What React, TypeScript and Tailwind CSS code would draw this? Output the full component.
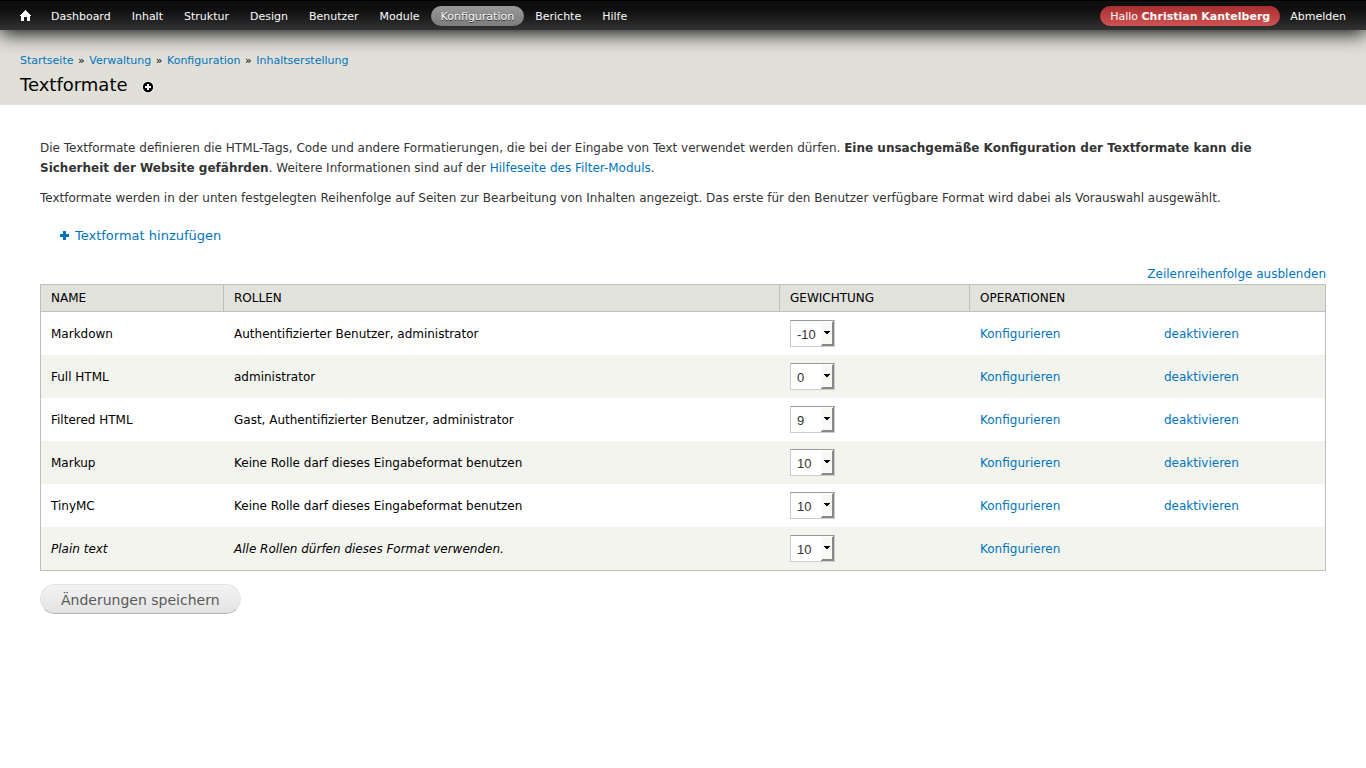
const menu = ["Dashboard", "Inhalt", "Struktur", "Design", "Benutzer", "Module", "Konfiguration", "Berichte", "Hilfe"];
const crumbs = ["Startseite", "Verwaltung", "Konfiguration", "Inhaltserstellung"];

type Format = { name: string; roles: string; weight: number; fallback?: boolean };

const formats: Format[] = [
  { name: "Markdown", roles: "Authentifizierter Benutzer, administrator", weight: -10 },
  { name: "Full HTML", roles: "administrator", weight: 0 },
  { name: "Filtered HTML", roles: "Gast, Authentifizierter Benutzer, administrator", weight: 9 },
  { name: "Markup", roles: "Keine Rolle darf dieses Eingabeformat benutzen", weight: 10 },
  { name: "TinyMC", roles: "Keine Rolle darf dieses Eingabeformat benutzen", weight: 10 },
  { name: "Plain text", roles: "Alle Rollen dürfen dieses Format verwenden.", weight: 10, fallback: true },
];

const weights = Array.from({ length: 21 }, (_, i) => i - 10);

function HomeIcon() {
  return (
    <svg width="11" height="11" viewBox="0 0 11 11" fill="#fff" shapeRendering="crispEdges" aria-hidden="true">
      <path d="M5 0h1v1h1v1h1v1h1v1h1v1h1v1h-1v5h-3V7H4v4H1V6H0V5h1V4h1V3h1V2h1V1h1z" />
    </svg>
  );
}

function Toolbar() {
  return (
    <nav className="relative z-10 flex h-[30px] items-start justify-between border-t border-black bg-linear-to-b from-[#0f0f0f] from-30% to-[#333] px-[10px] pt-[5px] text-[11px] leading-[20px] text-[#fafafa] shadow-[0_3px_20px_#000]">
      <ul className="flex">
        <li>
          <a href="#home" aria-label="Startseite" className="flex h-5 items-start px-[10px] pt-1">
            <HomeIcon />
          </a>
        </li>
        {menu.map((item) => (
          <li key={item} className="mr-px">
            <a
              href={"#" + item}
              className={
                item === "Konfiguration"
                  ? "block h-5 rounded-full bg-linear-to-b from-[#999] to-[#7c7c7c] px-[10px] leading-[22px] [text-shadow:0_1px_0_#333]"
                  : "block h-5 px-[10px] leading-[22px]"
              }
            >
              {item}
            </a>
          </li>
        ))}
      </ul>
      <ul className="flex">
        <li>
          <a href="#user" className="block h-5 rounded-full bg-linear-to-b from-[#a82f2f] to-[#cf5353] px-[10px] leading-[22px]">
            Hallo <strong>Christian Kantelberg</strong>
          </a>
        </li>
        <li>
          <a href="#logout" className="block h-5 px-[10px] leading-[22px]">Abmelden</a>
        </li>
      </ul>
    </nav>
  );
}

function WeightSelect({ format }: { format: Format }) {
  return (
    <div className="relative h-[27px] w-[45px]">
      <select
        aria-label={"Gewichtung für " + format.name}
        defaultValue={format.weight}
        className="block h-full w-full appearance-none border border-[#ccc] border-t-[#999] bg-white pt-[3px] pl-[6px] font-['Liberation_Sans',sans-serif] text-[13px] leading-[22px] text-[#333]"
      >
        {weights.map((w) => (
          <option key={w} value={w}>{w}</option>
        ))}
      </select>
      <svg className="pointer-events-none absolute top-px right-px" width="13" height="25" viewBox="0 0 13 25" shapeRendering="crispEdges" aria-hidden="true">
        <path d="M1 1H11V23H1z" fill="#f8f8f7" />
        <path d="M12 0h1v25H0v-1h1v-1h10V1h1z" fill="#888" />
        <path d="M3 10h6v1h-1v1h-1v1h-2v-1h-1v-1h-1z" fill="#000" />
      </svg>
    </div>
  );
}

export default function App() {
  return (
    <div className="min-h-screen bg-white font-['DejaVu_Sans',sans-serif] text-[12px] leading-[20px] text-[#333] [&_a:hover]:underline">
      <Toolbar />
      <header className="bg-[#e0e0d8] px-5 pt-[21px] pb-[7px] text-black">
        <div className="text-[11px] leading-[20px]">
          {crumbs.map((c, i) => (
            <span key={c}>
              {i > 0 && <span className="mx-px"> » </span>}
              <a href={"#" + c} className="text-[#0074bd]">{c}</a>
            </span>
          ))}
        </div>
        <div className="flex items-center gap-[14px]">
          <h1 className="text-[18px] leading-[27px]">Textformate</h1>
          <a href="#shortcut" aria-label="Zu Verknüpfungen hinzufügen" className="mt-1">
            <svg width="12" height="12" viewBox="0 0 12 12" aria-hidden="true">
              <circle cx="6" cy="6" r="6" fill="#fff" />
              <circle cx="6" cy="6" r="5.2" fill="#000" />
              <path d="M5 3h2v2h2v2H7v2H5V7H3V5h2z" fill="#fff" />
            </svg>
          </a>
        </div>
      </header>

      <main className="px-10 pt-[33px]">
        <p className="mb-[10px] pr-5">
          Die Textformate definieren die HTML-Tags, Code und andere Formatierungen, die bei der Eingabe von Text verwendet werden dürfen.{" "}
          <strong>Eine unsachgemäße Konfiguration der Textformate kann die Sicherheit der Website gefährden</strong>. Weitere
          Informationen sind auf der <a href="#filter" className="text-[#0074bd]">Hilfeseite des Filter-Moduls</a>.
        </p>
        <p>
          Textformate werden in der unten festgelegten Reihenfolge auf Seiten zur Bearbeitung von Inhalten angezeigt. Das erste
          für den Benutzer verfügbare Format wird dabei als Vorauswahl ausgewählt.
        </p>
        <a href="#add" className="mt-[18px] ml-5 inline-flex items-start gap-[6px] text-[13px] leading-[20px] text-[#0074bd]">
          <svg className="mt-[5px]" width="9" height="9" viewBox="0 0 9 9" fill="#0074bd" shapeRendering="crispEdges" aria-hidden="true">
            <path d="M3 0h3v3h3v3H6v3H3V6H0V3h3z" />
          </svg>
          Textformat hinzufügen
        </a>
        <div className="mt-[18px] text-right">
          <a href="#weights" className="text-[#0074bd]">Zeilenreihenfolge ausblenden</a>
        </div>

        <table className="w-full table-fixed border-separate border-spacing-0 border border-[#bebfb9] text-left text-black">
          <colgroup>
            <col className="w-[183px]" />
            <col />
            <col className="w-[190px]" />
            <col className="w-[184px]" />
            <col className="w-[171px]" />
          </colgroup>
          <thead>
            <tr className="h-[27px] bg-[#e1e2dc] uppercase [&_th]:border-b [&_th]:border-[#bebfb9] [&_th]:px-[10px] [&_th]:font-normal">
              <th className="border-r">Name</th>
              <th className="border-r">Rollen</th>
              <th className="border-r">Gewichtung</th>
              <th colSpan={2}>Operationen</th>
            </tr>
          </thead>
          <tbody>
            {formats.map((f) => (
              <tr key={f.name} className="h-[43px] even:bg-[#f3f4ee]">
                <td className={f.fallback ? "px-[10px] pt-px italic" : "px-[10px] pt-px"}>{f.name}</td>
                <td className={f.fallback ? "px-[10px] pt-px italic" : "px-[10px] pt-px"}>{f.roles}</td>
                <td className="px-[10px]"><WeightSelect format={f} /></td>
                <td className="px-[10px] pt-px"><a href="#configure" className="text-[#0074bd]">Konfigurieren</a></td>
                <td className="px-[10px] pt-px">{!f.fallback && <a href="#disable" className="text-[#0074bd]">deaktivieren</a>}</td>
              </tr>
            ))}
          </tbody>
        </table>

        <button
          type="button"
          className="mt-[13px] h-[30px] rounded-full border border-[#e4e4e4] border-b-[#b4b4b4] bg-linear-to-b from-[#f3f3f3] to-[#e3e3e3] px-5 pt-[2px] text-[14px] leading-[20px] text-[#5a5a5a]"
        >
          Änderungen speichern
        </button>
      </main>
    </div>
  );
}
